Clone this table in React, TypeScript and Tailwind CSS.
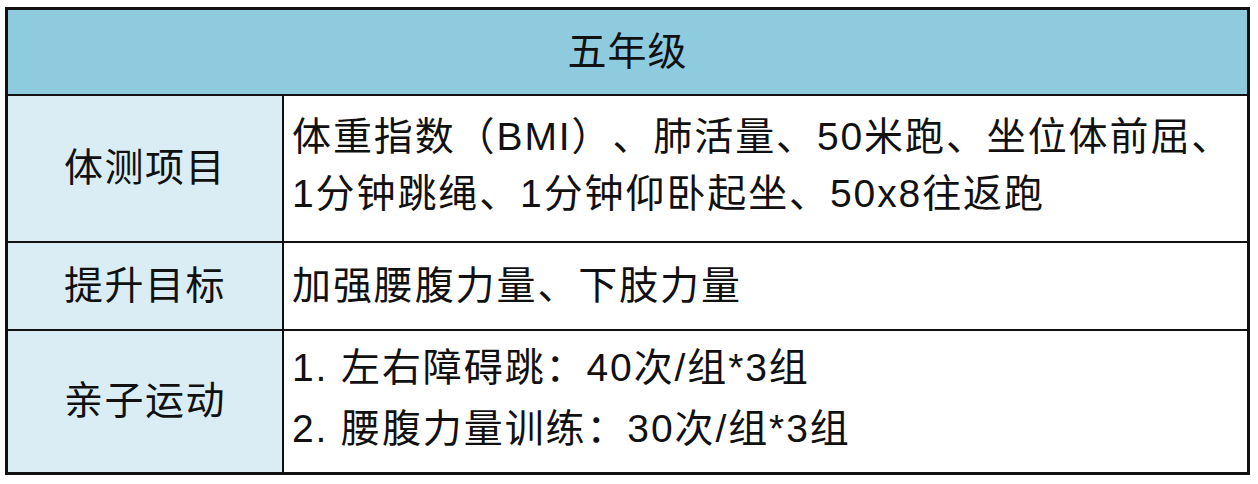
import React from 'react';

const font = { fontFamily: "'Liberation Sans', 'Noto Sans CJK SC', sans-serif" };

interface RowProps {
    label: string;
    lines: string[];
    height: string;
    leading: string;
    shift: string;
    last?: boolean;
}

const Row: React.FC<RowProps> = ({ label, lines, height, leading, shift, last }) => (
    <div className={`flex ${height} ${last ? '' : 'border-b-2 border-[#111]'}`}>
        {/* Label */}
        <div className="w-[276px] shrink-0 bg-[#daedf5] border-r-2 border-[#111] flex items-center justify-center">
            <span className="text-[39px] text-[#111] tracking-[1.5px]">{label}</span>
        </div>

        {/* Content */}
        <div className={`flex-1 flex flex-col justify-center pl-[8px] bg-white ${shift}`}>
            {lines.map((line) => (
                <div
                    key={line}
                    className={`text-[39px] ${leading} text-[#111] tracking-[1.9px] whitespace-nowrap [text-spacing-trim:space-all]`}
                >
                    {line}
                </div>
            ))}
        </div>
    </div>
);

export default function App() {
    return (
        <div className="w-[1258px] h-[484px] bg-white pt-[7px] pl-[5px]" style={font}>
            <div className="w-[1245px] border-[3px] border-[#111]">
                {/* Header */}
                <div className="h-[86px] bg-[#8fcbdf] border-b-2 border-[#111] flex items-center justify-center">
                    <span className="text-[39px] text-[#111] tracking-[1px]">五年级</span>
                </div>

                <Row
                    label="体测项目"
                    height="h-[147px]"
                    leading="leading-[57px]"
                    shift="pb-[8px]"
                    lines={[
                        '体重指数（BMI）、肺活量、50米跑、坐位体前屈、',
                        '1分钟跳绳、1分钟仰卧起坐、50x8往返跑',
                    ]}
                />
                <Row
                    label="提升目标"
                    height="h-[88px]"
                    leading="leading-[57px]"
                    shift="pb-[2px]"
                    lines={['加强腰腹力量、下肢力量']}
                />
                <Row
                    label="亲子运动"
                    height="h-[141px]"
                    leading="leading-[61px]"
                    shift="pb-[8px]"
                    last
                    lines={['1. 左右障碍跳：40次/组*3组', '2. 腰腹力量训练：30次/组*3组']}
                />
            </div>
        </div>
    );
}
